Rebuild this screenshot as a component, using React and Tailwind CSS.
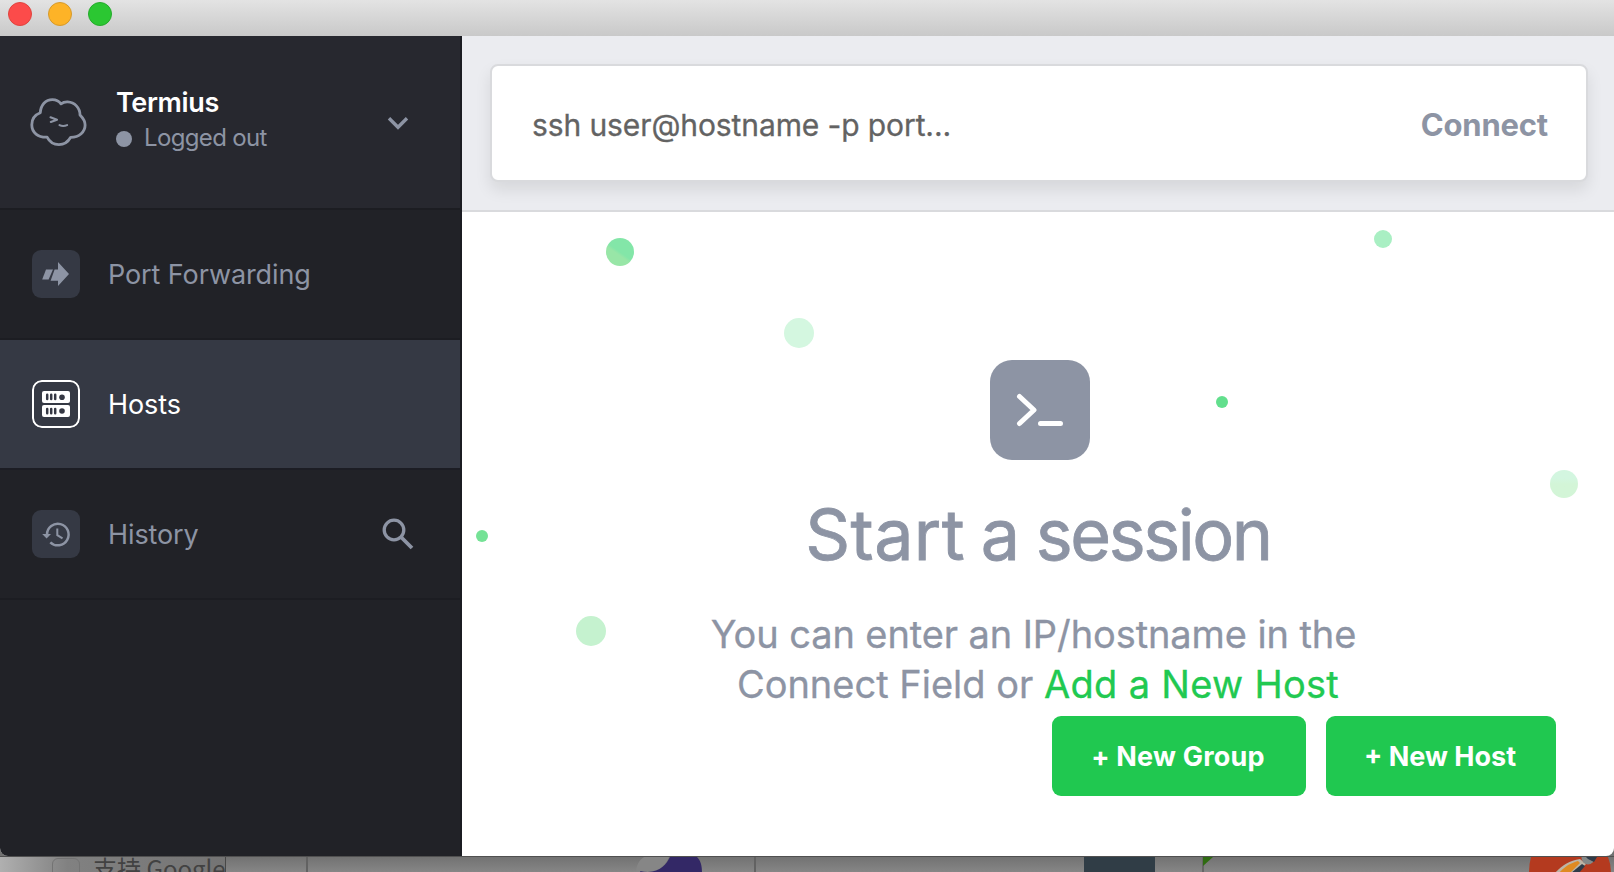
import React from 'react';

function CloudLogo() {
  return (
    <svg className="h-[50px] w-[58px] shrink-0" viewBox="0 0 58 50" fill="none" stroke="#8d94a4" strokeWidth="2.8" strokeLinecap="round" strokeLinejoin="round">
      <path d="M11.3 15.8C11.7 8 16.600 2.600 23.400 2.600c3.600 0 6.600 1.500 8.600 4.200C34 5.300 36.200 4.800 38.700 4.900 45.600 5.300 51 10.800 51 18c2.800 2.800 5.100 6 5.100 10C56.100 34.800 50.400 40.300 41.700 40.300 39 45 34.900 47.700 29.900 47.700 24.900 47.700 20.700 45.300 18.100 40.200 9 40.600 2.800 35.600 2.800 27.700 2.800 21.900 6.200 17.800 11.300 15.800Z" />
      <path d="M21.500 20.300 28 22.700 21.800 25M30.500 28.100c2.400 1.200 5 1.200 7.600 0" strokeWidth="2.1" />
    </svg>
  );
}

function ForwardIcon() {
  return (
    <svg className="size-12" viewBox="0 0 48 48" fill="#8d94a4">
      <path d="M14 19.500H21L16.600 29.500H10.200Z" />
      <path d="M22.600 19.500H26V12L37 24 26 36V30.700H18.600Z" />
    </svg>
  );
}

function HostsIcon() {
  return (
    <svg className="size-12" viewBox="0 0 48 48">
      <rect x="1" y="1" width="46" height="46" rx="9" fill="none" stroke="#fff" strokeWidth="2" />
      <rect x="10" y="11" width="28" height="12" rx="2" fill="#fff" />
      <rect x="10" y="25" width="28" height="12" rx="2" fill="#fff" />
      <g stroke="#353844" strokeWidth="2.500" strokeLinecap="round">
        <path d="M15.200 14.800V19M19.200 14.800V19M23.200 14.800V19M15.200 29V33.200M19.200 29V33.200M23.200 29V33.200" />
      </g>
      <circle cx="30" cy="17.200" r="2.800" fill="#353844" />
      <circle cx="30" cy="31" r="2.800" fill="#353844" />
    </svg>
  );
}

function HistoryIcon() {
  return (
    <svg className="size-12" viewBox="0 0 48 48" fill="none" stroke="#8d94a4" strokeWidth="2.500">
      <path d="M15 24.500A10.800 10.800 0 1 1 18.300 32.300" />
      <path d="M10.200 24H19L14.600 28.600Z" fill="#8d94a4" stroke="none" />
      <path d="M25.300 18.500V25.200L30.500 28.300" strokeWidth="2" />
    </svg>
  );
}

function NavItem({ icon, label, active, children }) {
  return (
    <div className={active ? 'flex h-[130px] shrink-0 items-center border-b-2 border-[#1c1d24] bg-[#353944] pl-8 pr-[46px] text-white' : 'flex h-[130px] shrink-0 items-center border-b-2 border-[#1c1d22] pl-8 pr-[46px] text-[#8d94a4]'}>
      <div className="size-12 overflow-hidden rounded-[9px] bg-[#353944]">{icon}</div>
      <span className="ml-7 flex-1 pt-0.5 text-[27px] leading-9 tracking-[-0.1px]">{label}</span>
      {children}
    </div>
  );
}

function Sidebar() {
  return (
    <aside className="flex w-[462px] shrink-0 flex-col border-r-2 border-[#1b1c22] bg-[#212227]">
      <div className="flex h-[174px] shrink-0 items-center border-b-2 border-[#1c1d22] bg-[#27282f] pl-[29px] pr-[51px]">
        <CloudLogo />
        <div className="ml-[29px] flex-1 pb-1">
          <div className="text-[27px] font-semibold leading-[34px] tracking-[-0.35px] text-white">Termius</div>
          <div className="flex items-center">
            <span className="mt-1 size-4 rounded-full bg-[#8d94a4]" />
            <span className="ml-3 text-2xl leading-[35px] tracking-[-0.65px] text-[#8d94a4]">Logged out</span>
          </div>
        </div>
        <svg className="mt-px h-3.5 w-[22px]" viewBox="0 0 22 14" fill="none" stroke="#8d94a4" strokeWidth="3.4">
          <path d="M2 2.300 11 11.300 20 2.300" />
        </svg>
      </div>
      <NavItem icon={<ForwardIcon />} label="Port Forwarding" />
      <NavItem icon={<HostsIcon />} label="Hosts" active />
      <NavItem icon={<HistoryIcon />} label="History">
        <svg className="size-8" viewBox="0 0 32 32" fill="none" stroke="#8d94a4" strokeWidth="3.300">
          <circle cx="12" cy="12" r="9.800" />
          <path d="M19.500 19.500 30 30" strokeWidth="3.800" />
        </svg>
      </NavItem>
    </aside>
  );
}

function Dots() {
  return (
    <>
      <span className="absolute left-[144px] top-[26px] size-7 rounded-full bg-linear-[35deg,#98e6a7_42%,#83e6a8_50%]" />
      <span className="absolute left-[322px] top-[106px] size-[30px] rounded-full bg-[#d4f7e0]" />
      <span className="absolute left-[912px] top-[18px] size-[18px] rounded-full bg-[#a9efc3]" />
      <span className="absolute left-[754px] top-[184px] size-3 rounded-full bg-[#62df8d]" />
      <span className="absolute left-[1088px] top-[258px] size-7 rounded-full bg-linear-to-b from-[#d3f6e0] from-30% to-[#d3f5d7] to-50%" />
      <span className="absolute left-[14px] top-[318px] size-3 rounded-full bg-[#75e296]" />
      <span className="absolute left-[114px] top-[404px] size-[30px] rounded-full bg-[#c5f2cf]" />
    </>
  );
}

function Desktop() {
  return (
    <div className="relative h-4 shrink-0 overflow-hidden border-t border-[#505050] bg-linear-to-b from-[#727272] to-[#868686]">
      <div className="absolute inset-y-0 left-0 w-[225px] bg-linear-to-r from-[#b0b0b0] via-[#818181] via-30% to-[#747474]" />
      <div className="absolute left-[52px] top-[1px] size-7 rounded-[6px] border border-[#737373]" />
      <div className="absolute -top-[3px] left-[93px] whitespace-nowrap font-['Noto_Sans_CJK_SC',sans-serif] text-[24px] leading-7 text-[#424242]">支持 Google</div>
      <div className="absolute inset-y-0 left-[225px] w-px bg-[#474747]" />
      <div className="absolute inset-y-0 left-[306px] w-0.5 bg-[#626262]" />
      <div className="absolute inset-y-0 left-[754px] w-0.5 bg-[#626262]" />
      <div className="absolute inset-y-0 left-[1084px] w-[71px] bg-[#303d46]" />
      <svg className="absolute left-[636px] top-0 h-4 w-[76px]" viewBox="0 0 76 16">
        <path d="M0 16C0 9 3 3 8 0H33C30 8 22 17 4 15Z" fill="#868686" />
        <path d="M4 14C22 18 30 8 34 0H61C65 4 66 9 66 16H5Z" fill="#332866" />
      </svg>
      <svg className="absolute left-[1202px] top-0 h-4 w-4" viewBox="0 0 16 16">
        <path d="M0 0H2V16H0Z" fill="#666" />
        <path d="M1 0H11L1 9Z" fill="#2f6b12" />
      </svg>
      <svg className="absolute left-[1528px] top-0 h-4 w-[86px]" viewBox="0 0 86 16">
        <path d="M3 0H80Q83 7 83 16H1Q1 7 3 0Z" fill="#b43a1f" />
        <path d="M27 16C34 8 41 4 52 2L58 7 50 16Z" fill="#bdb5a6" />
        <path d="M31 16C37 9 43 6 50 4L52 6 42 16Z" fill="#df8a22" />
        <path d="M43 16 54 7 57 9 51 16Z" fill="#2f3b48" />
        <circle cx="60" cy="1" r="6.500" fill="#858988" />
        <path d="M58 0H69L66 5 60 2Z" fill="#2f3b48" />
      </svg>
    </div>
  );
}

export default function App() {
  return (
    <div className="flex h-[872px] w-[1614px] flex-col overflow-hidden bg-[#727272] font-['Inter',sans-serif]">
      <div className="flex h-[856px] shrink-0 flex-col overflow-hidden rounded-b-lg bg-white">
        <header className="flex h-9 shrink-0 gap-4 bg-linear-to-b from-[#e3e3e3] to-[#c9c9c9] pl-2 pt-0.5">
          <span className="size-6 rounded-full border border-[#e0443e] bg-[#fc4b4a]" />
          <span className="size-6 rounded-full border border-[#d69a2c] bg-[#fdb327]" />
          <span className="size-6 rounded-full border border-[#25ab2c] bg-[#2bc732]" />
        </header>
        <div className="flex min-h-0 flex-1">
          <Sidebar />
          <main className="flex flex-1 flex-col">
            <div className="h-44 shrink-0 border-b-2 border-[#d9dadd] bg-[#ebecf0] pl-7 pr-[26px] pt-7">
              <div className="flex h-[118px] items-center justify-between rounded-lg border-2 border-[#d9dadd] bg-white pl-10 pr-[38px] shadow-[0_8px_16px_rgba(0,0,0,0.09)]">
                <span className="pt-1 text-[30px] leading-9 tracking-[-0.1px] text-[#636363] [-webkit-text-stroke:0.3px]">ssh user@hostname -p port...</span>
                <span className="pt-1 text-[31px] font-bold leading-9 tracking-[-0.2px] text-[#8d94a4]">Connect</span>
              </div>
            </div>
            <section className="relative flex flex-1 flex-col items-center pt-[148px]">
              <Dots />
              <div className="ml-1 size-[100px] rounded-[22px] bg-[#8d94a4]">
                <svg className="size-full" viewBox="0 0 100 100" fill="none" stroke="#fff" strokeWidth="5" strokeLinecap="round" strokeLinejoin="round">
                  <path d="M29.500 36.500 44 50 29.500 63.500M50.500 63.500H70.500" />
                </svg>
              </div>
              <h1 className="mt-[35px] text-[70px] leading-[80px] text-[#8d94a4] [-webkit-text-stroke:0.8px] [word-spacing:-4px]">
                <span className="tracking-[0.4px]">Start</span> a <span className="tracking-[-2.4px]">session</span>
              </h1>
              <p className="mt-[34px] text-center text-[38px] leading-[50px] text-[#8d94a4] [-webkit-text-stroke:0.3px]">
                <span className="pr-[9px] tracking-[-0.1px]">You can enter an IP/hostname in the</span><br />
                Connect Field or <a className="tracking-[0.3px] text-[#21c951]">Add a New Host</a>
              </p>
              <div className="mt-[7px] flex gap-5 self-end pr-[58px] text-[27px] font-bold leading-9 text-white">
                <button className="h-20 w-[254px] rounded-[9px] bg-[#20c850] pr-0.5 pt-0.5 tracking-[0.2px]">+ New Group</button>
                <button className="h-20 w-[230px] rounded-[9px] bg-[#20c850] pr-0.5 pt-0.5">+ New Host</button>
              </div>
            </section>
          </main>
        </div>
      </div>
      <Desktop />
    </div>
  );
}
